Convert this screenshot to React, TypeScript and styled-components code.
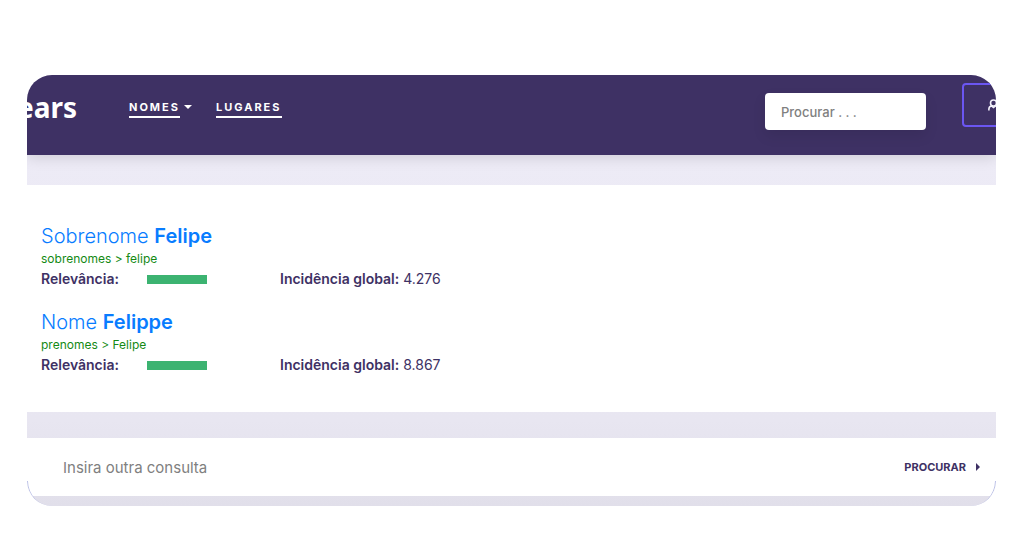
import React from "react";
import styled, { createGlobalStyle } from "styled-components";

const ink = "#3e3164";
const face = '"Inter", "Liberation Sans", sans-serif';

const GlobalStyle = createGlobalStyle`
  *, *::before, *::after { box-sizing: border-box; }
  body { margin: 0; background: #fff; color: ${ink}; font-family: ${face}; }
  button, input { font-family: inherit; }
`;

const Page = styled.div`
  padding: 75px 28px 30px 27px;
`;

const Card = styled.div`
  position: relative;
  border-radius: 25px;
  overflow: hidden;
  background: linear-gradient(#edebf6 20%, #e8e6f1 80%, #e1dfea);
  padding-bottom: 10px;

  &::after {
    content: "";
    position: absolute;
    inset: auto 0 0;
    height: 25px;
    border: 0 solid #b4bae4;
    border-width: 0 1px;
    border-radius: 0 0 25px 25px;
    pointer-events: none;
  }
`;

const Header = styled.header`
  position: relative;
  display: flex;
  height: 80px;
  background: ${ink};
  box-shadow: 0 2px 14px rgba(0, 0, 0, 0.14);
`;

const Logo = styled.a`
  display: flex;
  justify-content: flex-end;
  width: 50px;
  height: 64px;
  overflow: hidden;
  color: #fff;
  font: 700 28px/64px "Noto Sans", sans-serif;
  text-decoration: none;
`;

const Nav = styled.nav`
  display: flex;
  align-items: flex-start;
  gap: 24px;
  padding: 24px 0 0 52px;
`;

const NavItem = styled.div`
  display: flex;
  gap: 4px;
`;

const NavLink = styled.a`
  color: #fff;
  font-size: 11px;
  font-weight: 700;
  line-height: 17px;
  letter-spacing: 2px;
  text-decoration: none;
  border-bottom: 2px solid #fff;
`;

const Caret = styled.span`
  margin-top: 6px;
  height: 4px;
  border: 4px solid transparent;
  border-top-color: #fff;
  border-bottom: 0;
`;

const HeaderSearch = styled.input`
  width: 161px;
  height: 37px;
  margin: 18px 36px 0 auto;
  padding: 0 16px;
  border: 0;
  border-radius: 4px;
  background: #fff;
  box-shadow: 0 6px 14px rgba(0, 0, 0, 0.09);
  color: ${ink};
  font-size: 13px;
  font-weight: 500;
  &::placeholder { color: #808080; opacity: 1; }
`;

const AccountClip = styled.div`
  flex: none;
  width: 34px;
  height: 64px;
  padding-top: 8px;
  overflow: hidden;
`;

const AccountButton = styled.button`
  display: flex;
  align-items: center;
  width: 120px;
  height: 44px;
  padding: 0 24px;
  border: 2px solid #6b56f2;
  border-radius: 4px;
  background: transparent;
`;

const Results = styled.main`
  margin-top: 30px;
  padding: 37px 14px 36px;
  background: #fff;
`;

const Result = styled.article`
  & + & { margin-top: 18px; }
`;

const Title = styled.h2`
  margin: 0;
  font-size: 20px;
  font-weight: 300;
  line-height: 28px;
  a { color: #087cff; text-decoration: none; }
  b { font-weight: 600; }
`;

const Trail = styled.p`
  margin: 0;
  color: #148a14;
  font-size: 12px;
  line-height: 18px;
`;

const Facts = styled.div`
  display: flex;
  align-items: center;
  font-size: 14px;
  line-height: 22px;
`;

const Label = styled.span`
  font-weight: 600;
`;

const Relevance = styled.div`
  display: flex;
  align-items: center;
  width: 239px;
  ${Label} { width: 106px; }
`;

const Bar = styled.div`
  width: 60px;
  height: 9px;
  background: #3cb371;
`;

const QueryForm = styled.form`
  display: flex;
  align-items: center;
  height: 58px;
  margin-top: 26px;
  padding: 0 16px 0 36px;
  background: #fff;
`;

const QueryInput = styled.input`
  flex: 1;
  min-width: 0;
  padding: 0;
  border: 0;
  background: none;
  color: ${ink};
  font-size: 15px;
  &::placeholder { color: #808080; opacity: 1; }
`;

const Submit = styled.button`
  display: flex;
  align-items: center;
  gap: 10px;
  padding: 0;
  border: 0;
  background: none;
  color: ${ink};
  font-size: 11px;
  font-weight: 700;
`;

const Arrow = styled.span`
  border: 4px solid transparent;
  border-left-color: ${ink};
  border-right: 0;
`;

const results = [
  { kind: "Sobrenome", name: "Felipe", trail: "sobrenomes > felipe", count: "4.276" },
  { kind: "Nome", name: "Felippe", trail: "prenomes > Felipe", count: "8.867" },
];

export default function App() {
  return (
    <>
      <GlobalStyle />
      <Page>
        <Card>
          <Header>
            <Logo href="#">ears</Logo>
            <Nav>
              <NavItem>
                <NavLink href="#">NOMES</NavLink>
                <Caret />
              </NavItem>
              <NavItem>
                <NavLink href="#">LUGARES</NavLink>
              </NavItem>
            </Nav>
            <HeaderSearch type="text" aria-label="Procurar" placeholder="Procurar . . ." />
            <AccountClip>
              <AccountButton type="button" aria-label="Conta">
                <svg width="11" height="12" viewBox="0 0 11 12" fill="none" stroke="#f2f0fa" strokeWidth="1.6">
                  <circle cx="5.5" cy="4" r="3" />
                  <path d="M0.9 11.5V10C0.9 8.4 2 7.3 3.4 6.8L5.5 8.4L7.6 6.8C9 7.3 10.1 8.4 10.1 10V11.5" />
                </svg>
              </AccountButton>
            </AccountClip>
          </Header>
          <Results>
            {results.map((r) => (
              <Result key={r.name}>
                <Title>
                  <a href="#">{r.kind} <b>{r.name}</b></a>
                </Title>
                <Trail>{r.trail}</Trail>
                <Facts>
                  <Relevance>
                    <Label>Relevância:</Label>
                    <Bar />
                  </Relevance>
                  <div><Label>Incidência global:</Label> {r.count}</div>
                </Facts>
              </Result>
            ))}
          </Results>
          <QueryForm>
            <QueryInput type="text" aria-label="Insira outra consulta" placeholder="Insira outra consulta" />
            <Submit type="button">
              PROCURAR
              <Arrow />
            </Submit>
          </QueryForm>
        </Card>
      </Page>
    </>
  );
}
